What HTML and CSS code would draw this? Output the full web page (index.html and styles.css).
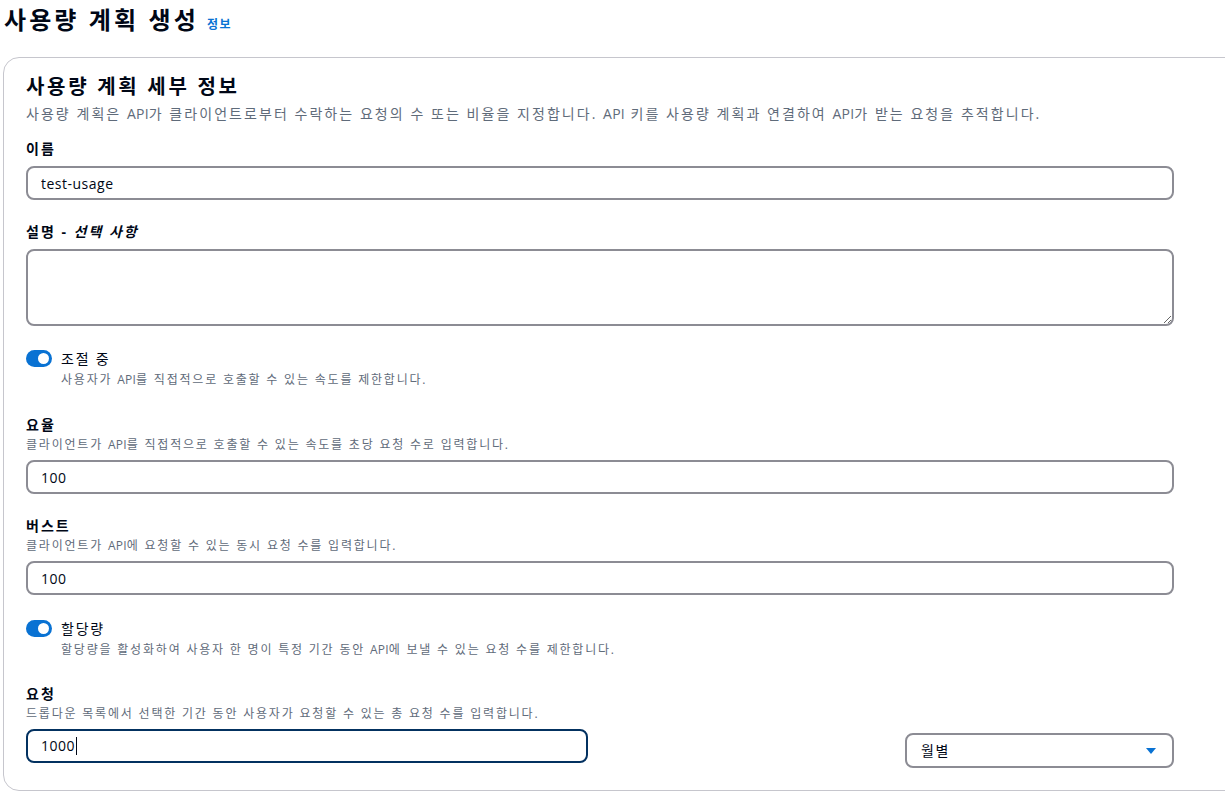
FILE: index.html
```html
<!DOCTYPE html>
<html lang="ko">
<head>
<meta charset="utf-8">
<title>사용량 계획 생성</title>
<link rel="stylesheet" href="styles.css">
</head>
<body>
<div class="page">
  <header class="page-header">
    <h1 class="page-title">사용량 계획 생성</h1>
    <a class="info-link" href="#">정보</a>
  </header>
  <section class="card">
    <h2 class="card-title">사용량 계획 세부 정보</h2>
    <p class="card-desc">사용량 계획은 <span class="latin">API</span>가 클라이언트로부터 수락하는 요청의 수 또는 비율을 지정합니다. <span class="latin">API</span> 키를 사용량 계획과 연결하여 <span class="latin">API</span>가 받는 요청을 추적합니다.</p>

    <div class="field field-first">
      <label class="label">이름</label>
      <input class="input" type="text" value="test-usage">
    </div>

    <div class="field">
      <label class="label">설명 - <i>선택 사항</i></label>
      <textarea class="input textarea"></textarea>
    </div>

    <div class="toggle-row toggle-first">
      <span class="toggle"><span class="knob"></span></span>
      <div class="toggle-text">
        <div class="toggle-label">조절 중</div>
        <div class="toggle-desc">사용자가 <span class="latin">API</span>를 직접적으로 호출할 수 있는 속도를 제한합니다.</div>
      </div>
    </div>

    <div class="field field-after-toggle">
      <label class="label">요율</label>
      <div class="hint">클라이언트가 <span class="latin">API</span>를 직접적으로 호출할 수 있는 속도를 초당 요청 수로 입력합니다.</div>
      <input class="input" type="text" value="100">
    </div>

    <div class="field">
      <label class="label">버스트</label>
      <div class="hint">클라이언트가 <span class="latin">API</span>에 요청할 수 있는 동시 요청 수를 입력합니다.</div>
      <input class="input" type="text" value="100">
    </div>

    <div class="toggle-row toggle-second">
      <span class="toggle"><span class="knob"></span></span>
      <div class="toggle-text">
        <div class="toggle-label">할당량</div>
        <div class="toggle-desc">할당량을 활성화하여 사용자 한 명이 특정 기간 동안 <span class="latin">API</span>에 보낼 수 있는 요청 수를 제한합니다.</div>
      </div>
    </div>

    <div class="field field-after-toggle2">
      <label class="label">요청</label>
      <div class="hint">드롭다운 목록에서 선택한 기간 동안 사용자가 요청할 수 있는 총 요청 수를 입력합니다.</div>
      <div class="quota-row">
        <div class="input input-focused"><span class="value">1000</span><span class="caret"></span></div>
        <div class="select">
          <span class="select-value">월별</span>
          <svg class="select-caret" width="12" height="8" viewBox="0 0 12 8"><path d="M1 1h10L6 7z" fill="#0972d3"/></svg>
        </div>
      </div>
    </div>
  </section>
</div>
</body>
</html>
```

FILE: styles.css
```css
* { box-sizing: border-box; }
html, body { margin: 0; padding: 0; background: #fff; overflow: hidden; }
body {
  font-family: "Open Sans", "Noto Sans CJK KR", sans-serif;
  color: #000716;
  font-size: 14px;
  line-height: 20px;
}
.latin { letter-spacing: 0.2px; }
.page { padding: 0 0 0 3px; }
.page-header {
  display: flex;
  align-items: baseline;
  gap: 8px;
  padding: 4px 0 0 1px;
  height: 57px;
}
.page-title {
  margin: 0;
  font-size: 24px;
  line-height: 32px;
  font-weight: 700;
  letter-spacing: 3.1px;
}
.info-link {
  color: #0972d3;
  font-size: 12px;
  font-weight: 700;
  text-decoration: none;
  letter-spacing: 1.5px;
}
.card {
  border: 1px solid #c6c6cd;
  border-radius: 16px;
  margin-right: -40px;
  padding: 17px 20px 27px 22px;
  height: 734px;
}
.card-title {
  margin: 0;
  font-size: 20px;
  line-height: 24px;
  font-weight: 700;
  letter-spacing: 2.7px;
}
.card-desc {
  margin: 5px 0 0;
  color: #5f6b7a;
  font-size: 14px;
  line-height: 20px;
  letter-spacing: 2.05px;
}
.field { margin-top: 22px; display: flex; flex-direction: column; }
.field-first { margin-top: 15px; }
.label {
  font-weight: 700;
  font-size: 14px;
  line-height: 20px;
  display: block;
  margin-bottom: 7px;
  letter-spacing: 2px;
}
.label i { font-weight: 700; }
.hint {
  color: #5f6b7a;
  font-size: 12px;
  line-height: 16px;
  margin: -5px 0 7px;
  letter-spacing: 1.8px;
}
.input {
  width: 1148px;
  height: 34px;
  border: 2px solid #8c8c94;
  border-radius: 8px;
  padding: 0 13px;
  font-family: "Open Sans", "Noto Sans CJK KR", sans-serif;
  font-size: 14px;
  letter-spacing: 0.5px;
  color: #000716;
  background: #fff;
  outline: none;
}
.textarea { height: 77px; resize: vertical; padding: 4px 13px; display: block; }
.toggle-row { display: flex; gap: 9px; align-items: flex-start; }
.toggle-first { margin-top: 23px; }
.toggle-second { margin-top: 24px; }
.toggle {
  width: 26px;
  height: 17px;
  border-radius: 9px;
  background: #0972d3;
  margin-top: 1px;
  display: flex;
  align-items: center;
  justify-content: flex-end;
  padding-right: 3px;
  flex: none;
}
.knob { width: 11px; height: 11px; border-radius: 50%; background: #fff; }
.toggle-label { font-size: 14px; line-height: 20px; letter-spacing: 1.8px; }
.toggle-desc {
  color: #5f6b7a;
  font-size: 12px;
  line-height: 16px;
  margin-top: 3px;
  letter-spacing: 1.8px;
}
.field-after-toggle { margin-top: 27px; }
.field-after-toggle2 { margin-top: 26px; }
.quota-row { display: flex; align-items: flex-start; gap: 317px; }
.input-focused {
  width: 562px;
  border-color: #033160;
  display: flex;
  align-items: center;
}
.caret { width: 1px; height: 18px; background: #000716; margin-left: 1px; }
.select {
  width: 269px;
  height: 35px;
  margin-top: 4px;
  border: 2px solid #8c8c94;
  border-radius: 8px;
  padding: 0 15px 0 14px;
  display: flex;
  align-items: center;
  justify-content: space-between;
}
.select-value { font-size: 14px; letter-spacing: 1.5px; }
.select-caret { display: block; }
```
